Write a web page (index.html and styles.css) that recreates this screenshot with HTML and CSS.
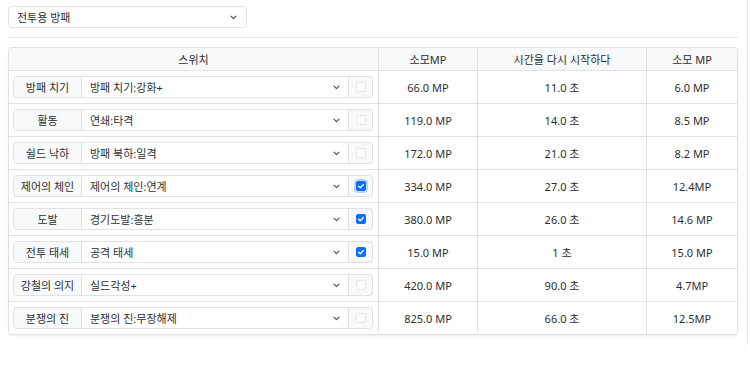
FILE: index.html
```html
<!DOCTYPE html>
<html lang="ko">
<head>
<meta charset="utf-8">
<link rel="stylesheet" href="styles.css">
</head>
<body>
<div class="page">
  <div class="top-select">
    <span>전투용 방패</span>
    <svg class="chev" width="7" height="5" viewBox="0 0 7 5"><path d="M1 1.2l2.5 2.5 2.5-2.5" fill="none" stroke="#495057" stroke-width="1.2" stroke-linecap="round" stroke-linejoin="round"/></svg>
  </div>
  <div class="divider"></div>
  <div class="table-card">
    <table class="skills">
      <colgroup><col class="c1"><col class="c2"><col class="c3"><col class="c4"></colgroup>
      <thead>
        <tr><th>스위치</th><th>소모MP</th><th>시간을 다시 시작하다</th><th>소모 MP</th></tr>
      </thead>
      <tbody>
        <tr>
          <td class="sw"><div class="group"><span class="g-label">방패 치기</span><span class="g-select"><span>방패 치기:강화+</span><svg class="chev" width="7" height="5" viewBox="0 0 7 5"><path d="M1 1.2l2.5 2.5 2.5-2.5" fill="none" stroke="#495057" stroke-width="1.2" stroke-linecap="round" stroke-linejoin="round"/></svg></span><span class="g-check"><span class="cb"></span></span></div></td>
          <td>66.0 MP</td><td>11.0 초</td><td>6.0 MP</td>
        </tr>
        <tr>
          <td class="sw"><div class="group"><span class="g-label">활동</span><span class="g-select"><span>연쇄:타격</span><svg class="chev" width="7" height="5" viewBox="0 0 7 5"><path d="M1 1.2l2.5 2.5 2.5-2.5" fill="none" stroke="#495057" stroke-width="1.2" stroke-linecap="round" stroke-linejoin="round"/></svg></span><span class="g-check"><span class="cb"></span></span></div></td>
          <td>119.0 MP</td><td>14.0 초</td><td>8.5 MP</td>
        </tr>
        <tr>
          <td class="sw"><div class="group"><span class="g-label">쉴드 낙하</span><span class="g-select"><span>방패 북하:일격</span><svg class="chev" width="7" height="5" viewBox="0 0 7 5"><path d="M1 1.2l2.5 2.5 2.5-2.5" fill="none" stroke="#495057" stroke-width="1.2" stroke-linecap="round" stroke-linejoin="round"/></svg></span><span class="g-check"><span class="cb"></span></span></div></td>
          <td>172.0 MP</td><td>21.0 초</td><td>8.2 MP</td>
        </tr>
        <tr>
          <td class="sw"><div class="group"><span class="g-label">제어의 체인</span><span class="g-select"><span>제어의 체인:연계</span><svg class="chev" width="7" height="5" viewBox="0 0 7 5"><path d="M1 1.2l2.5 2.5 2.5-2.5" fill="none" stroke="#495057" stroke-width="1.2" stroke-linecap="round" stroke-linejoin="round"/></svg></span><span class="g-check"><span class="cb on focus"><svg width="8" height="8" viewBox="0 0 8 8"><path d="M1.6 4.2l1.7 1.6 3.1-3.3" fill="none" stroke="#fff" stroke-width="1.3" stroke-linecap="round" stroke-linejoin="round"/></svg></span></span></div></td>
          <td>334.0 MP</td><td>27.0 초</td><td>12.4MP</td>
        </tr>
        <tr>
          <td class="sw"><div class="group"><span class="g-label">도발</span><span class="g-select"><span>경기도발:흥분</span><svg class="chev" width="7" height="5" viewBox="0 0 7 5"><path d="M1 1.2l2.5 2.5 2.5-2.5" fill="none" stroke="#495057" stroke-width="1.2" stroke-linecap="round" stroke-linejoin="round"/></svg></span><span class="g-check"><span class="cb on"><svg width="8" height="8" viewBox="0 0 8 8"><path d="M1.6 4.2l1.7 1.6 3.1-3.3" fill="none" stroke="#fff" stroke-width="1.3" stroke-linecap="round" stroke-linejoin="round"/></svg></span></span></div></td>
          <td>380.0 MP</td><td>26.0 초</td><td>14.6 MP</td>
        </tr>
        <tr>
          <td class="sw"><div class="group"><span class="g-label">전투 태세</span><span class="g-select"><span>공격 태세</span><svg class="chev" width="7" height="5" viewBox="0 0 7 5"><path d="M1 1.2l2.5 2.5 2.5-2.5" fill="none" stroke="#495057" stroke-width="1.2" stroke-linecap="round" stroke-linejoin="round"/></svg></span><span class="g-check"><span class="cb on"><svg width="8" height="8" viewBox="0 0 8 8"><path d="M1.6 4.2l1.7 1.6 3.1-3.3" fill="none" stroke="#fff" stroke-width="1.3" stroke-linecap="round" stroke-linejoin="round"/></svg></span></span></div></td>
          <td>15.0 MP</td><td>1 초</td><td>15.0 MP</td>
        </tr>
        <tr>
          <td class="sw"><div class="group"><span class="g-label">강철의 의지</span><span class="g-select"><span>실드각성+</span><svg class="chev" width="7" height="5" viewBox="0 0 7 5"><path d="M1 1.2l2.5 2.5 2.5-2.5" fill="none" stroke="#495057" stroke-width="1.2" stroke-linecap="round" stroke-linejoin="round"/></svg></span><span class="g-check"><span class="cb"></span></span></div></td>
          <td>420.0 MP</td><td>90.0 초</td><td>4.7MP</td>
        </tr>
        <tr>
          <td class="sw"><div class="group"><span class="g-label">분쟁의 진</span><span class="g-select"><span>분쟁의 진:무장해제</span><svg class="chev" width="7" height="5" viewBox="0 0 7 5"><path d="M1 1.2l2.5 2.5 2.5-2.5" fill="none" stroke="#495057" stroke-width="1.2" stroke-linecap="round" stroke-linejoin="round"/></svg></span><span class="g-check"><span class="cb"></span></span></div></td>
          <td>825.0 MP</td><td>66.0 초</td><td>12.5MP</td>
        </tr>
      </tbody>
    </table>
  </div>
</div>
</body>
</html>
```

FILE: styles.css
```css
html, body {
  margin: 0;
  padding: 0;
  background: #fff;
}
body {
  font-family: "Noto Sans", "Noto Sans CJK KR", sans-serif;
  font-size: 11px;
  color: #2b2f33;
}
.page {
  width: 730px;
  height: 339px;
  padding: 6px 9px 0 8px;
  border-right: 1px solid #dee2e6;
  border-bottom-right-radius: 4px;
}
.top-select {
  box-sizing: border-box;
  width: 239px;
  height: 22px;
  border: 1px solid #dee2e6;
  border-radius: 4px;
  display: flex;
  align-items: center;
  justify-content: space-between;
  padding: 0 9px 0 8px;
  font-size: 11px;
}
.divider {
  height: 1px;
  background: #dee2e6;
  margin: 9px 0 9px 0;
}
.table-card {
  border: 1px solid #dee2e6;
  border-radius: 4px;
  overflow: hidden;
  box-shadow: 0 1px 2px rgba(0,0,0,0.08);
}
.skills {
  width: 100%;
  border-collapse: separate;
  border-spacing: 0;
  table-layout: fixed;
}
.c1 { width: 370px; }
.c2 { width: 99px; }
.c3 { width: 169px; }
.c4 { width: auto; }
.skills th {
  background: #f8f9fa;
  font-weight: normal;
  height: 22px;
  padding: 0;
  text-align: center;
  border-bottom: 1px solid #dee2e6;
  border-right: 1px solid #dee2e6;
}
.skills td {
  height: 32px;
  padding: 0;
  text-align: center;
  border-bottom: 1px solid #dee2e6;
  border-right: 1px solid #dee2e6;
}
.skills th:last-child, .skills td:last-child { border-right: none; }
.skills tbody tr:last-child td { border-bottom: none; }
.skills td.sw {
  padding: 0 5px 0 4px;
}
.group {
  display: flex;
  height: 22px;
  box-sizing: border-box;
}
.g-label {
  box-sizing: border-box;
  width: 69px;
  flex: none;
  background: #f8f9fa;
  border: 1px solid #dee2e6;
  border-radius: 4px 0 0 4px;
  display: flex;
  align-items: center;
  justify-content: center;
}
.g-select {
  flex: 1;
  box-sizing: border-box;
  border: 1px solid #dee2e6;
  border-left: none;
  display: flex;
  align-items: center;
  justify-content: space-between;
  padding: 0 8px 0 8px;
  text-align: left;
}
.g-check {
  box-sizing: border-box;
  width: 24px;
  flex: none;
  background: #f8f9fa;
  border: 1px solid #dee2e6;
  border-left: none;
  border-radius: 0 4px 4px 0;
  display: flex;
  align-items: center;
  justify-content: center;
}
.cb {
  box-sizing: border-box;
  width: 10px;
  height: 10px;
  border: 1px solid #e3e6e9;
  border-radius: 2px;
  background: #fff;
  display: flex;
  align-items: center;
  justify-content: center;
}
.cb.on {
  background: #0d6efd;
  border-color: #0d6efd;
}
.cb.focus {
  box-shadow: 0 0 0 2px rgba(13,110,253,0.25);
}
.chev { flex: none; }
```
